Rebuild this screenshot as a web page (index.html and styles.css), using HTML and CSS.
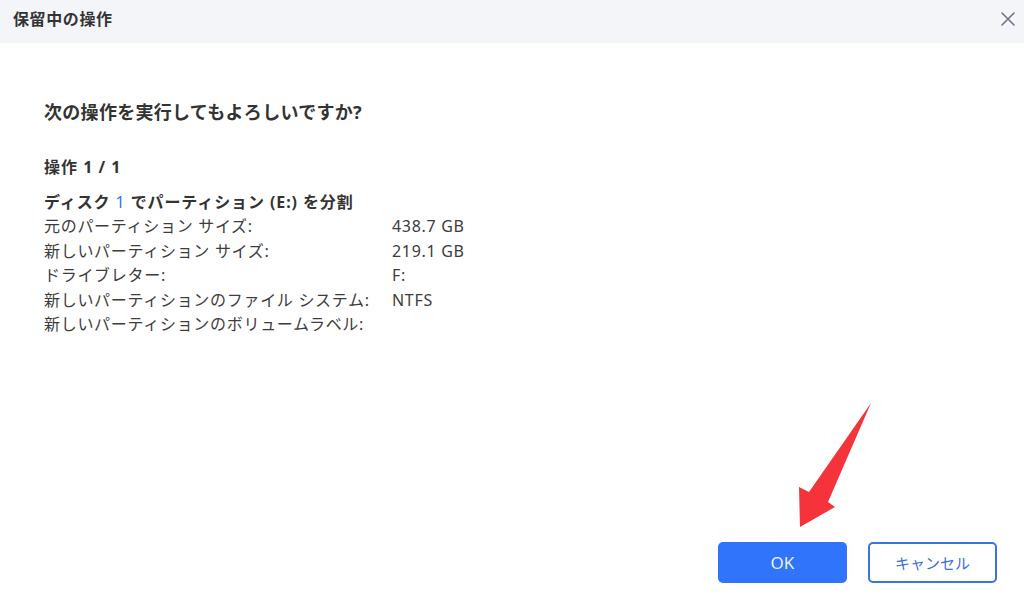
FILE: index.html
```html
<!DOCTYPE html>
<html lang="ja">
<head>
<meta charset="utf-8">
<title>保留中の操作</title>
<link rel="stylesheet" href="styles.css">
</head>
<body>
<div class="dialog">
  <header class="header">
    <h1 class="title">保留中の操作</h1>
    <button class="close" aria-label="閉じる">
      <svg width="16" height="16" viewBox="0 0 16 16"><path d="M2 2 L14 14 M14 2 L2 14" stroke="#6e7587" stroke-width="1.6" stroke-linecap="round" fill="none"/></svg>
    </button>
  </header>
  <main class="body">
    <p class="question">次の操作を実行してもよろしいですか?</p>
    <p class="op-count">操作 1 / 1</p>
    <p class="op-title">ディスク <span class="num">1</span> でパーティション (E:) を分割</p>
    <div class="details">
      <span class="label">元のパーティション サイズ:</span><span class="value">438.7 GB</span>
      <span class="label">新しいパーティション サイズ:</span><span class="value">219.1 GB</span>
      <span class="label">ドライブレター:</span><span class="value">F:</span>
      <span class="label">新しいパーティションのファイル システム:</span><span class="value">NTFS</span>
      <span class="label">新しいパーティションのボリュームラベル:</span><span class="value"></span>
    </div>
  </main>
  <footer class="footer">
    <button class="btn btn-primary">OK</button>
    <button class="btn btn-outline">キャンセル</button>
  </footer>
  <svg class="arrow" width="1024" height="603" viewBox="0 0 1024 603">
    <polygon points="871,403 809,492 799,487 800,527 835,507 828,502" fill="#f5333b"/>
  </svg>
</div>
</body>
</html>
```

FILE: styles.css
```css
* { box-sizing: border-box; }
html, body { margin: 0; padding: 0; }
body {
  width: 1024px;
  height: 603px;
  background: #ffffff;
  font-family: "Noto Sans", "Noto Sans CJK JP", sans-serif;
  color: #333333;
  overflow: hidden;
}
.dialog {
  position: relative;
  width: 1024px;
  height: 603px;
  display: flex;
  flex-direction: column;
}
.header {
  height: 43px;
  background: #f4f5f8;
  display: flex;
  align-items: center;
  justify-content: space-between;
  padding: 0 8px 0 13px;
}
.title {
  margin: 0;
  font-size: 16px;
  font-weight: 700;
  letter-spacing: 0.6px;
  color: #333;
  line-height: 1;
  margin-top: -5px;
}
.close {
  border: 0;
  background: transparent;
  padding: 0;
  width: 16px;
  height: 16px;
  display: flex;
  align-items: center;
  justify-content: center;
  margin-top: -5px;
}
.body {
  flex: 1;
  padding: 57px 44px 0 44px;
}
.question {
  margin: 0;
  font-size: 18px;
  font-weight: 700;
  letter-spacing: 0.3px;
  line-height: 24px;
  color: #333;
}
.op-count {
  margin: 31px 0 0 0;
  font-size: 16px;
  font-weight: 700;
  letter-spacing: 1px;
  line-height: 24px;
  color: #333;
}
.op-title {
  margin: 11px 0 0 0;
  font-size: 16px;
  font-weight: 700;
  letter-spacing: 0.9px;
  line-height: 24px;
  color: #333;
}
.num {
  color: #3b74e0;
  font-weight: 400;
}
.details {
  display: grid;
  grid-template-columns: 348px auto;
  grid-auto-rows: 24.5px;
  font-size: 16px;
  letter-spacing: 0.7px;
  line-height: 24.5px;
  color: #3c3c3c;
}
.footer {
  display: flex;
  justify-content: flex-end;
  gap: 21px;
  padding: 0 27px 20px 0;
}
.btn {
  width: 129px;
  height: 41px;
  border-radius: 5px;
  font-family: "Noto Sans", "Noto Sans CJK JP", sans-serif;
  cursor: pointer;
}
.btn-primary {
  background: #2f74fa;
  border: 0;
  color: #eaf1ff;
  font-size: 17px;
}
.btn-outline {
  background: #ffffff;
  border: 2px solid #3d73dc;
  color: #3d6fd6;
  font-size: 15px;
}
.arrow {
  position: absolute;
  left: 0;
  top: 0;
  pointer-events: none;
}
```
